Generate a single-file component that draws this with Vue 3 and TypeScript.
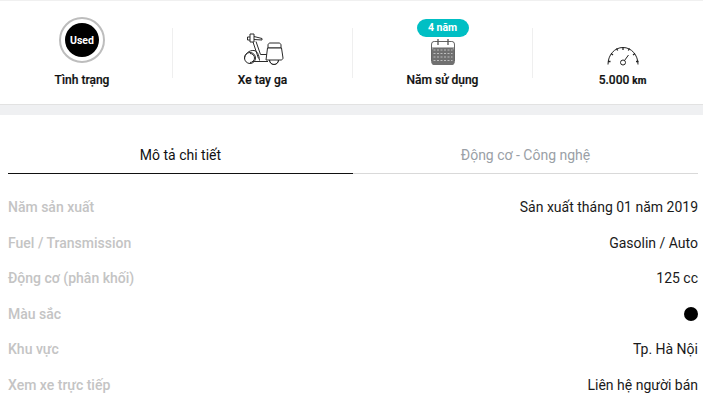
<script setup lang="ts">
interface Row { label: string; value: string; swatch?: boolean }
const rows: Row[] = [
  { label: 'Năm sản xuất', value: 'Sản xuất tháng 01 năm 2019' },
  { label: 'Fuel / Transmission', value: 'Gasolin / Auto' },
  { label: 'Động cơ (phân khối)', value: '125 cc' },
  { label: 'Màu sắc', value: '', swatch: true },
  { label: 'Khu vực', value: 'Tp. Hà Nội' },
  { label: 'Xem xe trực tiếp', value: 'Liên hệ người bán' },
]
const calCells = [0, 1, 2, 3]
</script>

<template>
  <div class="page">
    <section class="stats">
      <div class="stat">
        <div class="used-ring"><div class="used-disc">Used</div></div>
        <div class="stat-label">Tình trạng</div>
      </div>
      <div class="stat">
        <svg class="scooter" width="40" height="32" viewBox="0 0 40 32" fill="none" stroke="#2a2a2a" stroke-width="1">
          <circle cx="30" cy="27" r="4.500" />
          <circle cx="6" cy="25" r="5.500" />
          <path d="M6 20.500a4.500 4.500 0 0 1 0 9" />
          <path d="M.5 26C.5 21 5 17 10 17.500c3 .5 5 3.500 5.500 10" />
          <path d="M6 1h4v8H6zM10 3.500l8 2V7l-8-.5M6 4H3.500v3H6" />
          <path d="M9 9l5.500 16.500M12 8.500l4.500 13H24M8 28.500h16" />
          <path d="M24 15v-3c0-1 1-2 2-2h9c1 0 2 1 2 2v3z" />
          <path d="M22 27l1.500-12h14l1.500 10c0 1-1 2-2 2z" fill="#fff" />
          <path d="M25.500 27a4.500 4.500 0 0 0 9 0" />
        </svg>
        <div class="stat-label">Xe tay ga</div>
      </div>
      <div class="stat">
        <span class="badge">4 năm</span>
        <svg class="calendar" width="24" height="27" viewBox="0 0 24 27">
          <rect x="0.500" y="2.500" width="23" height="23" rx="3" fill="#fff" stroke="#666" />
          <path d="M.5 9V6c0-2 1-3.500 3-3.500h17c2 0 3 1.500 3 3.500v3z" fill="#fff" stroke="#666" />
          <rect x="1" y="9" width="22" height="17" rx="2" fill="#707070" />
          <path d="M7 0v6M17 0v6" stroke="#555" stroke-width="1.300" />
          <g v-for="i in calCells" :key="i">
            <path :d="`M2.500 ${11 + i * 3.500}h19`" stroke="#bdbdbd" stroke-width="1" stroke-dasharray="2 1.500" />
          </g>
        </svg>
        <div class="stat-label">Năm sử dụng</div>
      </div>
      <div class="stat">
        <svg class="gauge" width="32" height="20" viewBox="0 0 32 20" fill="none" stroke="#222" stroke-width="1">
          <path d="M1 18.500C1 9 7.500 1.500 16 1.500S31 9 31 18.500" />
          <path stroke-width="1.300" d="M1 15.500h2.500M29 15.500h2.500M4 7.500l2 1.500M28 7.500l-2 1.500M9.500 2.500l1.200 2M22.500 2.500l-1.200 2M16 1v3" />
          <circle cx="16" cy="16.500" r="2.500" />
          <path d="M17.500 14.500L21.500 9" />
        </svg>
        <div class="stat-label">5.000 <span class="km">km</span></div>
      </div>
    </section>

    <div class="band"></div>

    <section class="details">
      <div class="tabs">
        <div class="tab active">Mô tả chi tiết</div>
        <div class="tab">Động cơ - Công nghệ</div>
      </div>
      <ul class="rows">
        <li v-for="row in rows" :key="row.label" class="row">
          <span class="row-label">{{ row.label }}</span>
          <span v-if="row.swatch" class="swatch"></span>
          <span v-else class="row-value">{{ row.value }}</span>
        </li>
      </ul>
    </section>
  </div>
</template>

<style>
html, body { margin: 0; padding: 0; background: #fff; overflow: hidden; }
</style>

<style scoped>
.page {
  width: 703px;
  height: 420px;
  overflow: hidden;
  font-family: Roboto, "Liberation Sans", sans-serif;
  border-top: 1px solid #f0f0f0;
  box-sizing: border-box;
}
.stats {
  display: grid;
  grid-template-columns: repeat(4, 180px);
  margin-left: -8px;
  height: 104px;
  padding-top: 27px;
  box-sizing: border-box;
  border-bottom: 1px solid #e2e2e2;
}
.stat {
  position: relative;
  height: 50px;
}
.stat + .stat { border-left: 1px solid #efefef; }
.stat-label {
  position: absolute;
  top: 44px;
  left: 0;
  right: 0;
  text-align: center;
  font-size: 12px;
  line-height: 16px;
  font-weight: 500;
  color: #111;
  -webkit-text-stroke: 0.2px #111;
}
.km { font-size: 10px; font-weight: 700; }
.used-ring {
  position: absolute;
  top: -11px;
  left: 50%;
  margin-left: -23px;
  width: 46px;
  height: 46px;
  box-sizing: border-box;
  border: 2px solid #bdbdbd;
  border-radius: 50%;
  display: flex;
  align-items: center;
  justify-content: center;
}
.used-disc {
  width: 34px;
  height: 34px;
  border-radius: 50%;
  background: #000;
  color: #fff;
  font-size: 10.500px;
  font-weight: 700;
  display: flex;
  align-items: center;
  justify-content: center;
}
.scooter {
  position: absolute;
  top: 5px;
  left: 50%;
  margin-left: -19px;
}
.badge {
  position: absolute;
  top: -9px;
  left: 50%;
  margin-left: -26px;
  width: 52px;
  height: 18px;
  border-radius: 9px;
  background: #00bfc4;
  color: #fff;
  font-size: 10.500px;
  font-weight: 700;
  line-height: 18px;
  text-align: center;
}
.calendar {
  position: absolute;
  top: 11px;
  left: 50%;
  margin-left: -12px;
}
.gauge {
  position: absolute;
  top: 18px;
  left: 50%;
  margin-left: -16px;
}
.band {
  height: 10px;
  background: #eff0f2;
}
.details {
  padding: 0 5px 0 8px;
}
.tabs {
  display: grid;
  grid-template-columns: 345px 345px;
}
.tab {
  height: 59px;
  box-sizing: border-box;
  padding-top: 30px;
  font-size: 14px;
  line-height: 20px;
  text-align: center;
  color: #9aa0a6;
  border-bottom: 1px solid #d9d9d9;
}
.tab.active {
  color: #111;
  border-bottom-color: #111;
}
.rows {
  list-style: none;
  margin: 15.500px 0 0;
  padding: 0;
}
.row {
  display: flex;
  justify-content: space-between;
  align-items: center;
  height: 35.500px;
  font-size: 14px;
}
.row-label {
  color: #c4c4c4;
  font-weight: 500;
}
.row-value {
  color: #1a1a1a;
}
.swatch {
  width: 14px;
  height: 14px;
  border-radius: 50%;
  background: #000;
}
</style>
